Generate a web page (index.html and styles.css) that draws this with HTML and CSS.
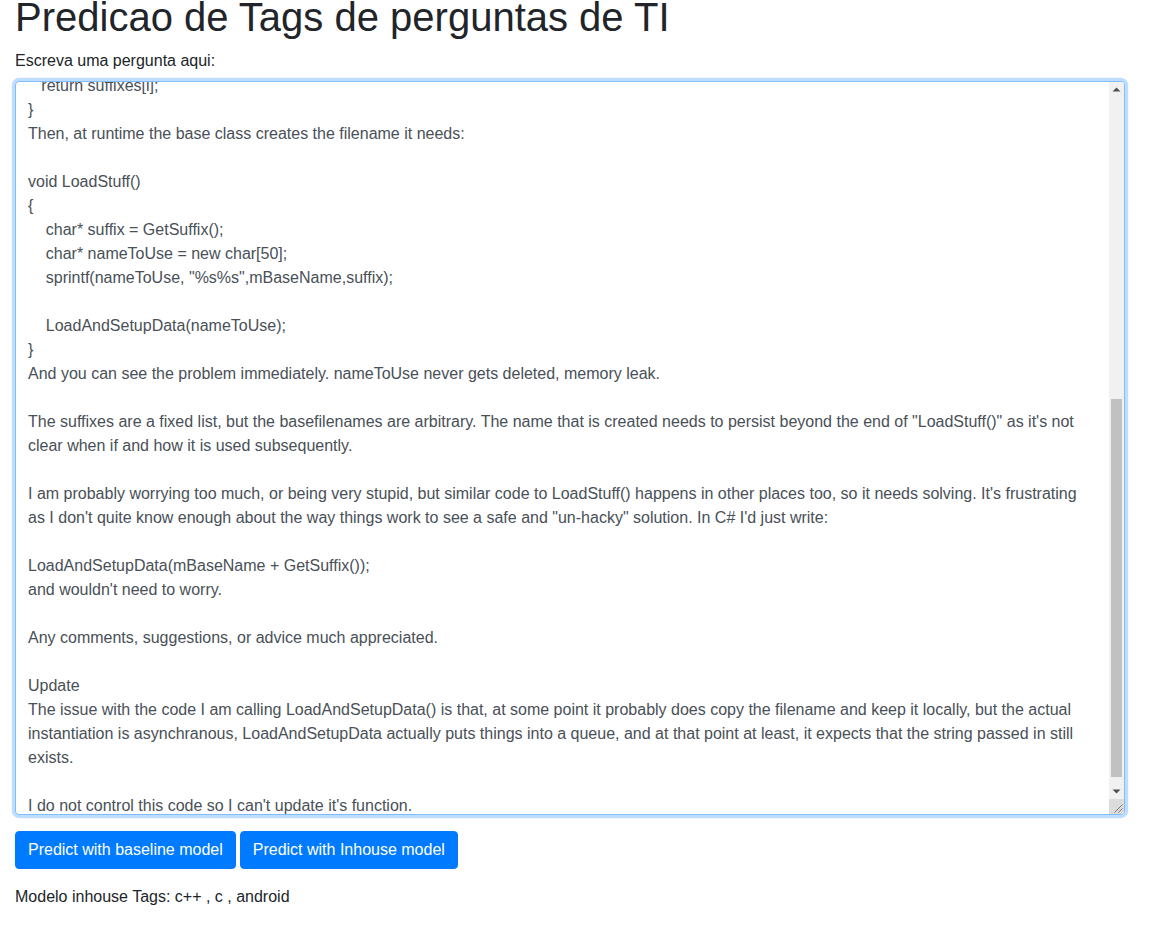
FILE: index.html
```html
<!DOCTYPE html>
<html lang="pt">
<head>
<meta charset="utf-8">
<title>Predicao de Tags</title>
<link rel="stylesheet" href="styles.css">
</head>
<body>
<div class="page">
  <h1 class="title">Predicao de Tags de perguntas de TI</h1>
  <form class="form">
    <div class="form-group">
      <label class="label" for="question">Escreva uma pergunta aqui:</label>
      <div class="input-wrap">
      <textarea id="question" class="question-input">
I'm working on a C++ project (not C#) and I've got a small memory management problem that I'm not sure how best to solve.

I have a base class that loads its data from files. Each instance has a base filename, stored as:

char* mBaseName;

Derived classes add a suffix to this name depending on what they need to load, via a virtual function:

virtual char* GetSuffix() = 0;

A typical implementation looks like this:

static char* suffixes[] = {
    "_low.dat",
    "_med.dat",
    "_high.dat"
};

char* DerivedLoader::GetSuffix()
{
    int i = GetQualityLevel();
    if (i &lt; 0 || i &gt; 2)
        i = 0;

   return suffixes[i];
}
Then, at runtime the base class creates the filename it needs:

void LoadStuff()
{
    char* suffix = GetSuffix();
    char* nameToUse = new char[50];
    sprintf(nameToUse, "%s%s",mBaseName,suffix);

    LoadAndSetupData(nameToUse);
}
And you can see the problem immediately. nameToUse never gets deleted, memory leak.

The suffixes are a fixed list, but the basefilenames are arbitrary. The name that is created needs to persist beyond the end of "LoadStuff()" as it's not clear when if and how it is used subsequently.

I am probably worrying too much, or being very stupid, but similar code to LoadStuff() happens in other places too, so it needs solving. It's frustrating as I don't quite know enough about the way things work to see a safe and "un-hacky" solution. In C# I'd just write:

LoadAndSetupData(mBaseName + GetSuffix());
and wouldn't need to worry.

Any comments, suggestions, or advice much appreciated.

Update
The issue with the code I am calling LoadAndSetupData() is that, at some point it probably does copy the filename and keep it locally, but the actual instantiation is asynchranous, LoadAndSetupData actually puts things into a queue, and at that point at least, it expects that the string passed in still exists.

I do not control this code so I can't update it's function.</textarea>
        <div class="scrollbar" aria-hidden="true">
          <div class="sb-button">
            <svg width="15" height="15" viewBox="0 0 15 15"><path d="M3.5 9.5h8l-4-4z" fill="#505050"/></svg>
          </div>
          <div class="sb-track"><div class="sb-thumb"></div></div>
          <div class="sb-button">
            <svg width="15" height="15" viewBox="0 0 15 15"><path d="M3.5 5.5h8l-4 4z" fill="#505050"/></svg>
          </div>
          <div class="sb-corner">
            <svg width="15" height="15" viewBox="0 0 15 15"><path d="M13.5 5.5l-8 8M13.5 9.5l-4 4" stroke="#7a7a7a" stroke-width="1"/></svg>
          </div>
        </div>
      </div>
    </div>
    <div class="actions">
      <button type="button" class="btn">Predict with baseline model</button>
      <button type="button" class="btn">Predict with Inhouse model</button>
    </div>
  </form>
  <p class="result">Modelo inhouse Tags: c++ , c , android</p>
</div>
<script src="script.js"></script>
</body>
</html>
```
FILE: styles.css
```css
html, body {
  margin: 0;
  padding: 0;
  background: #fff;
}
body {
  font-family: "Liberation Sans", Arial, sans-serif;
  font-size: 16px;
  line-height: 1.5;
  color: #212529;
}
.page {
  width: 1110px;
  padding: 0 15px;
}
.title {
  margin: -7px 0 8px;
  font-size: 40px;
  font-weight: 400;
  line-height: 1.2;
  color: #212529;
}
.form {
  margin: 0;
}
.form-group {
  margin-bottom: 16px;
}
.label {
  display: inline-block;
  margin-bottom: 8px;
}
.input-wrap {
  position: relative;
}
.question-input {
  display: block;
  box-sizing: border-box;
  width: 100%;
  height: 734px;
  margin: 0;
  padding: 6px 27px 6px 12px;
  font-family: "Liberation Sans", Arial, sans-serif;
  font-size: 16px;
  line-height: 1.5;
  color: #495057;
  background: #fff;
  border: 1px solid #80bdff;
  border-radius: 4px;
  box-shadow: 0 0 0 3.2px rgba(0, 123, 255, 0.25);
  outline: none;
  resize: none;
  overflow: hidden;
}
.scrollbar {
  position: absolute;
  top: 1px;
  right: 1px;
  bottom: 1px;
  width: 15px;
  display: flex;
  flex-direction: column;
  background: #f1f1f1;
  border-top-right-radius: 3px;
  border-bottom-right-radius: 3px;
  overflow: hidden;
}
.sb-button,
.sb-corner {
  flex: 0 0 15px;
  height: 15px;
}
.sb-button svg,
.sb-corner svg {
  display: block;
}
.sb-corner {
  background: #dcdcdc;
}
.sb-track {
  flex: 1 1 auto;
  display: flex;
  flex-direction: column;
}
.sb-thumb {
  margin: 0 2px;
  background: #c1c1c1;
}
.actions {
  display: flex;
  gap: 4px;
}
.btn {
  padding: 6px 12px;
  font-family: "Liberation Sans", Arial, sans-serif;
  font-size: 16px;
  line-height: 1.5;
  color: #fff;
  background: #007bff;
  border: 1px solid #007bff;
  border-radius: 4px;
  cursor: pointer;
}
.result {
  margin: 16px 0 0;
}
```
FILE: script.js
```js
(function () {
  var ta = document.getElementById('question');
  ta.scrollTop = 590;
  var track = document.querySelector('.sb-track');
  var thumb = document.querySelector('.sb-thumb');
  var trackH = track.clientHeight;
  var max = ta.scrollHeight - ta.clientHeight;
  var thumbH = Math.round(trackH * ta.clientHeight / ta.scrollHeight);
  var top = max > 0 ? Math.round((trackH - thumbH) * ta.scrollTop / max) : 0;
  thumb.style.height = thumbH + 'px';
  thumb.style.marginTop = (top - 2) + 'px';
})();
```
